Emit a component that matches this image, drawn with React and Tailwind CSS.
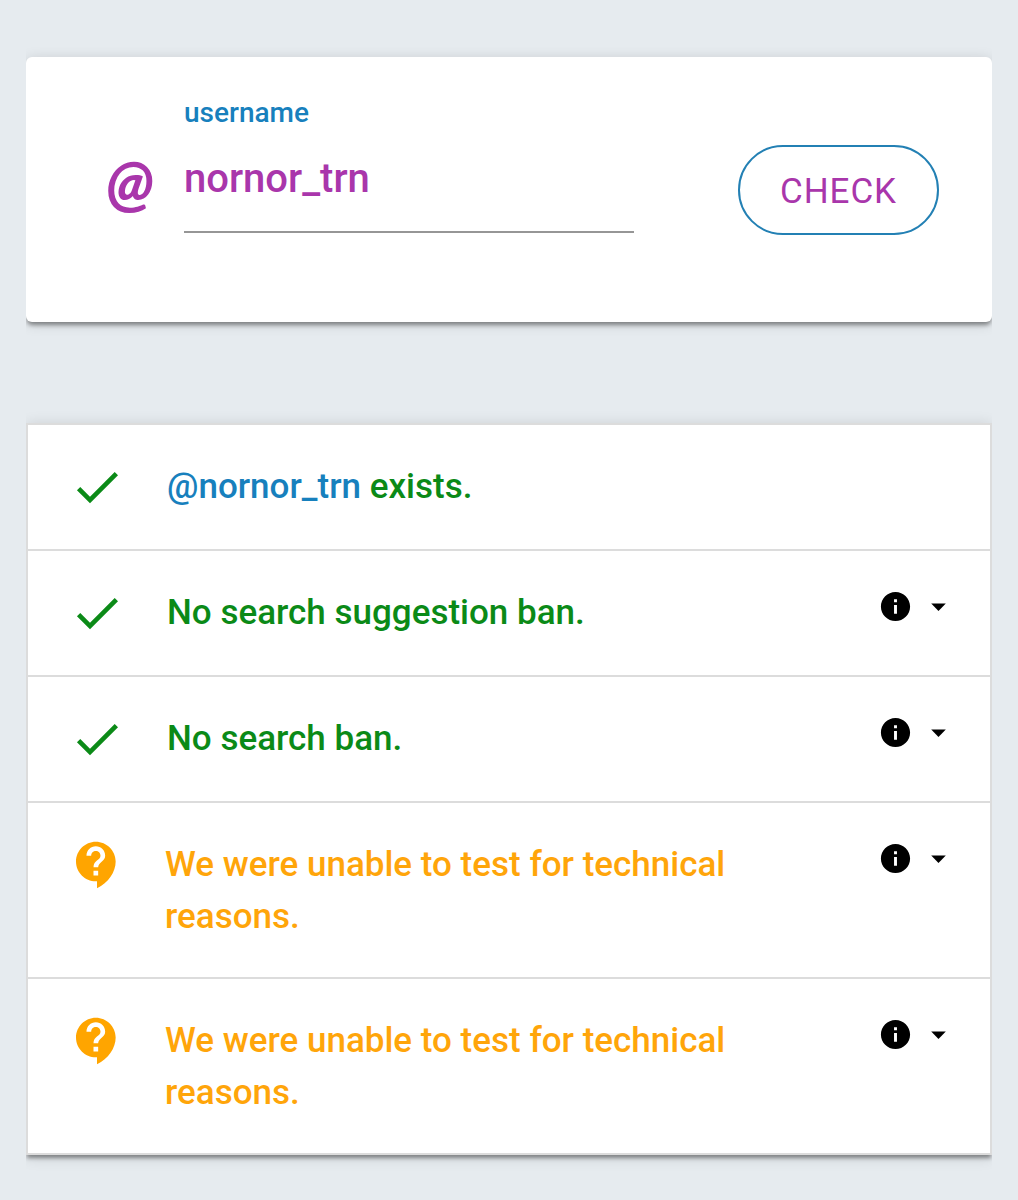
import React, { useState } from 'react';
import { MdCheck, MdInfo, MdArrowDropDown } from 'react-icons/md';

const results = [
  { id: 'exists', status: 'ok', text: 'exists.', handle: true },
  { id: 'suggestion', status: 'ok', text: 'No search suggestion ban.', details: true },
  { id: 'search', status: 'ok', text: 'No search ban.', details: true },
  { id: 'ghost', status: 'unknown', text: 'We were unable to test for technical reasons.', details: true },
  { id: 'reply', status: 'unknown', text: 'We were unable to test for technical reasons.', details: true },
];

function ContactSupportIcon({ className }) {
  return (
    <svg viewBox="0 0 24 24" fill="currentColor" className={className} aria-hidden="true">
      <path d="M11.5 2C6.81 2 3 5.81 3 10.5S6.81 19 11.5 19h.5v3c4.86-2.34 8-7 8-11.5C20 5.81 16.19 2 11.5 2zm1 14.5h-2v-2h2v2zm0-3.5h-2c0-3.25 3-3 3-5 0-1.1-.9-2-2-2s-2 .9-2 2h-2c0-2.21 1.79-4 4-4s4 1.79 4 4c0 2.5-3 2.75-3 5z" />
    </svg>
  );
}

function ResultRow({ result, username }) {
  const ok = result.status === 'ok';

  return (
    <li className="flex items-start border-b-2 border-[#dcdcdc] py-[34px] pr-[34px] pl-[41px] last:border-b-0">
      {ok ? (
        <MdCheck className="mr-[42px] size-14 shrink-0 text-[#0b8a17]" />
      ) : (
        <ContactSupportIcon className="mr-10 size-14 shrink-0 text-[#ffa500]" />
      )}

      <p className={`mt-0.5 flex-1 text-[35px]/[52px] font-medium ${ok ? 'text-[#0b8a17]' : 'text-[#ffa50a]'}`}>
        {result.handle && (
          <>
            <a href="#profile" className="text-[#1780bd]">@{username}</a>{' '}
          </>
        )}
        {result.text}
      </p>

      {result.details && (
        <button type="button" aria-label="Show details" className="mt-1 ml-24 flex shrink-0 items-center gap-2 text-black">
          <MdInfo className="size-[35px]" />
          <MdArrowDropDown className="size-[35px]" />
        </button>
      )}
    </li>
  );
}

export default function App() {
  const [username, setUsername] = useState('nornor_trn');

  return (
    <div className="min-h-screen bg-[#e6ebef] px-[26px] py-[57px] font-['Roboto',sans-serif]">
      {/* Username form, shadow only above and below */}
      <form
        onSubmit={(e) => e.preventDefault()}
        className="flex items-start rounded-md bg-white pt-10 pr-[53px] pb-[87px] pl-20 shadow-[0_4px_4px_-1px_rgba(0,0,0,0.4),0_2px_14px_rgba(0,0,0,0.14)] [clip-path:inset(-20px_0)]"
      >
        <span className="mt-[52px] w-[78px] shrink-0 font-['Lato',sans-serif] text-[62px]/[64px] font-black text-[#a936ab] italic">@</span>

        <div className="flex min-w-0 flex-1 flex-col">
          <label htmlFor="username" className="text-[28px]/[32px] font-medium text-[#1780bd]">username</label>
          <input
            id="username"
            type="text"
            value={username}
            onChange={(e) => setUsername(e.target.value)}
            className="mt-4 h-[88px] w-full border-b-2 border-[#969696] pb-5 text-[40px] font-medium text-[#a936ab] outline-none"
          />
        </div>

        <button
          type="submit"
          className="mt-12 ml-[104px] h-[90px] w-[201px] shrink-0 rounded-full border-2 border-[#2380b4] pt-1 text-[35px] tracking-wide text-[#a936ab]"
        >
          CHECK
        </button>
      </form>

      {/* Test results */}
      <ul className="mt-[101px] border-2 border-[#dcdcdc] bg-white shadow-[0_4px_4px_-1px_rgba(0,0,0,0.4),0_2px_14px_rgba(0,0,0,0.14)] [clip-path:inset(-20px_0)]">
        {results.map((result) => (
          <ResultRow key={result.id} result={result} username={username} />
        ))}
      </ul>
    </div>
  );
}
